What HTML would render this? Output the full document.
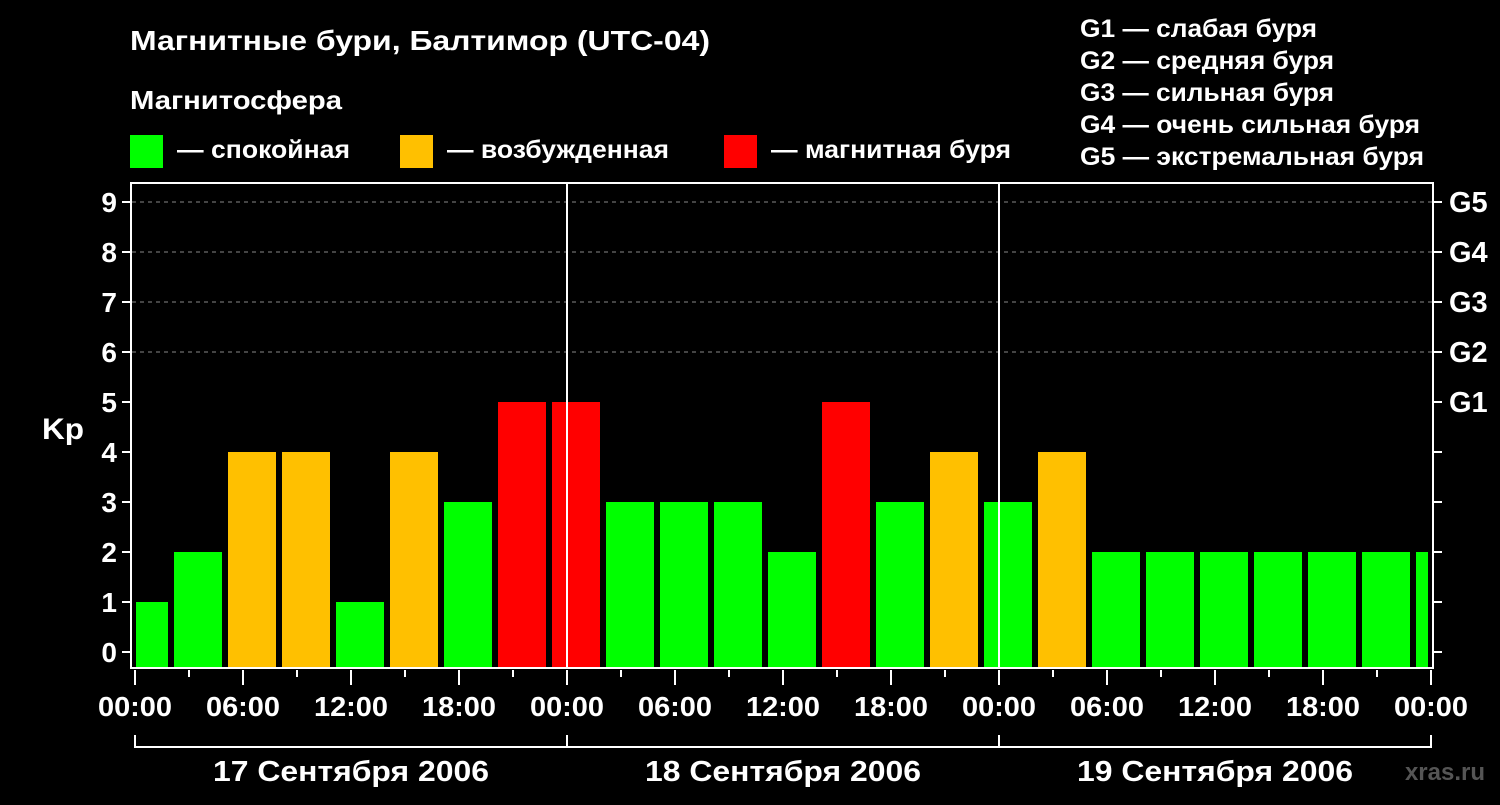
<!DOCTYPE html><html><head><meta charset="utf-8"><style>body{margin:0;background:#000}svg text{font-family:"Liberation Sans",sans-serif;font-weight:bold;fill:#fff}</style></head><body>
<svg width="1500" height="800" viewBox="0 0 1500 800" xmlns="http://www.w3.org/2000/svg">
<rect width="1500" height="800" fill="#000"/>
<text x="130" y="50" font-size="26" textLength="580" lengthAdjust="spacingAndGlyphs" style="font-size:28px">Магнитные бури, Балтимор (UTC-04)</text>
<text x="130" y="109" font-size="26" textLength="212" lengthAdjust="spacingAndGlyphs">Магнитосфера</text>
<rect x="130" y="135" width="33" height="33" fill="#00ff00"/><text x="177" y="158" font-size="25" textLength="173" lengthAdjust="spacingAndGlyphs">— спокойная</text>
<rect x="400" y="135" width="33" height="33" fill="#ffc000"/><text x="447" y="158" font-size="25" textLength="222" lengthAdjust="spacingAndGlyphs">— возбужденная</text>
<rect x="724" y="135" width="33" height="33" fill="#ff0000"/><text x="771" y="158" font-size="25" textLength="240" lengthAdjust="spacingAndGlyphs">— магнитная буря</text>
<g font-size="25"><text x="1080" y="37" textLength="237" lengthAdjust="spacingAndGlyphs">G1 — слабая буря</text><text x="1080" y="69" textLength="254" lengthAdjust="spacingAndGlyphs">G2 — средняя буря</text><text x="1080" y="101" textLength="254" lengthAdjust="spacingAndGlyphs">G3 — сильная буря</text><text x="1080" y="133" textLength="340" lengthAdjust="spacingAndGlyphs">G4 — очень сильная буря</text><text x="1080" y="165" textLength="344" lengthAdjust="spacingAndGlyphs">G5 — экстремальная буря</text></g>
<g stroke="#888" stroke-dasharray="4,4" stroke-width="1"><line x1="132" x2="1433" y1="202" y2="202"/><line x1="132" x2="1433" y1="252" y2="252"/><line x1="132" x2="1433" y1="302" y2="302"/><line x1="132" x2="1433" y1="352" y2="352"/></g>
<svg x="136" y="0" width="1292" height="668"><g transform="translate(-136,0)">
<rect x="120" y="602" width="48" height="66" fill="#00ff00"/>
<rect x="174" y="552" width="48" height="116" fill="#00ff00"/>
<rect x="228" y="452" width="48" height="216" fill="#ffc000"/>
<rect x="282" y="452" width="48" height="216" fill="#ffc000"/>
<rect x="336" y="602" width="48" height="66" fill="#00ff00"/>
<rect x="390" y="452" width="48" height="216" fill="#ffc000"/>
<rect x="444" y="502" width="48" height="166" fill="#00ff00"/>
<rect x="498" y="402" width="48" height="266" fill="#ff0000"/>
<rect x="552" y="402" width="48" height="266" fill="#ff0000"/>
<rect x="606" y="502" width="48" height="166" fill="#00ff00"/>
<rect x="660" y="502" width="48" height="166" fill="#00ff00"/>
<rect x="714" y="502" width="48" height="166" fill="#00ff00"/>
<rect x="768" y="552" width="48" height="116" fill="#00ff00"/>
<rect x="822" y="402" width="48" height="266" fill="#ff0000"/>
<rect x="876" y="502" width="48" height="166" fill="#00ff00"/>
<rect x="930" y="452" width="48" height="216" fill="#ffc000"/>
<rect x="984" y="502" width="48" height="166" fill="#00ff00"/>
<rect x="1038" y="452" width="48" height="216" fill="#ffc000"/>
<rect x="1092" y="552" width="48" height="116" fill="#00ff00"/>
<rect x="1146" y="552" width="48" height="116" fill="#00ff00"/>
<rect x="1200" y="552" width="48" height="116" fill="#00ff00"/>
<rect x="1254" y="552" width="48" height="116" fill="#00ff00"/>
<rect x="1308" y="552" width="48" height="116" fill="#00ff00"/>
<rect x="1362" y="552" width="48" height="116" fill="#00ff00"/>
<rect x="1416" y="552" width="48" height="116" fill="#00ff00"/>
</g></svg>
<g stroke="#fff" stroke-width="2" fill="none">
<rect x="131" y="183" width="1302" height="485"/>
<line x1="567" y1="183" x2="567" y2="668"/><line x1="999" y1="183" x2="999" y2="668"/>
<path d="M122 202h9M122 252h9M122 302h9M122 352h9M122 402h9M122 452h9M122 502h9M122 552h9M122 602h9M122 652h9"/>
<path d="M1433 202h9M1433 252h9M1433 302h9M1433 352h9M1433 402h9M1433 452h9M1433 502h9M1433 552h9M1433 602h9M1433 652h9"/>
<path d="M135 670v15M243 670v15M351 670v15M459 670v15M567 670v15M675 670v15M783 670v15M891 670v15M999 670v15M1107 670v15M1215 670v15M1323 670v15M1431 670v15"/>
<path d="M189 670v7M297 670v7M405 670v7M513 670v7M621 670v7M729 670v7M837 670v7M945 670v7M1053 670v7M1161 670v7M1269 670v7M1377 670v7"/>
<path d="M135 735v12H1431v-12M567 735v12M999 735v12"/>
</g>
<g font-size="28" text-anchor="end"><text x="117" y="212">9</text><text x="117" y="262">8</text><text x="117" y="312">7</text><text x="117" y="362">6</text><text x="117" y="412">5</text><text x="117" y="462">4</text><text x="117" y="512">3</text><text x="117" y="562">2</text><text x="117" y="612">1</text><text x="117" y="662">0</text></g>
<text x="42" y="439" font-size="30" textLength="42" lengthAdjust="spacingAndGlyphs">Kp</text>
<g font-size="29"><text x="1449" y="212">G5</text><text x="1449" y="262">G4</text><text x="1449" y="312">G3</text><text x="1449" y="362">G2</text><text x="1449" y="412">G1</text></g>
<g font-size="28" text-anchor="middle"><text x="135" y="716" textLength="74" lengthAdjust="spacingAndGlyphs">00:00</text><text x="243" y="716" textLength="74" lengthAdjust="spacingAndGlyphs">06:00</text><text x="351" y="716" textLength="74" lengthAdjust="spacingAndGlyphs">12:00</text><text x="459" y="716" textLength="74" lengthAdjust="spacingAndGlyphs">18:00</text><text x="567" y="716" textLength="74" lengthAdjust="spacingAndGlyphs">00:00</text><text x="675" y="716" textLength="74" lengthAdjust="spacingAndGlyphs">06:00</text><text x="783" y="716" textLength="74" lengthAdjust="spacingAndGlyphs">12:00</text><text x="891" y="716" textLength="74" lengthAdjust="spacingAndGlyphs">18:00</text><text x="999" y="716" textLength="74" lengthAdjust="spacingAndGlyphs">00:00</text><text x="1107" y="716" textLength="74" lengthAdjust="spacingAndGlyphs">06:00</text><text x="1215" y="716" textLength="74" lengthAdjust="spacingAndGlyphs">12:00</text><text x="1323" y="716" textLength="74" lengthAdjust="spacingAndGlyphs">18:00</text><text x="1431" y="716" textLength="74" lengthAdjust="spacingAndGlyphs">00:00</text></g>
<g font-size="29" text-anchor="middle"><text x="351" y="781" textLength="276" lengthAdjust="spacingAndGlyphs">17 Сентября 2006</text><text x="783" y="781" textLength="276" lengthAdjust="spacingAndGlyphs">18 Сентября 2006</text><text x="1215" y="781" textLength="276" lengthAdjust="spacingAndGlyphs">19 Сентября 2006</text></g>
<text x="1485" y="780" font-size="24" text-anchor="end" style="fill:#555">xras.ru</text>
</svg></body></html>
